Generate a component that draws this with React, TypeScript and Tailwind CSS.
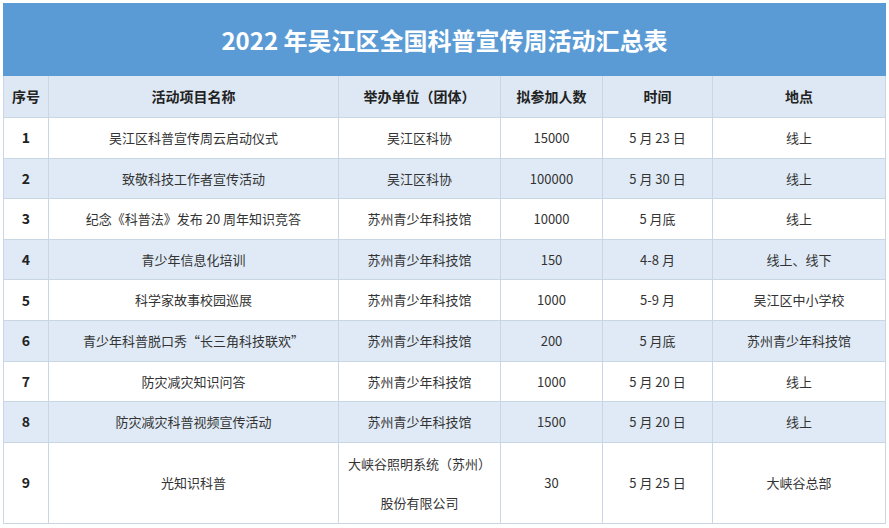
const rows = [
	["1", "吴江区科普宣传周云启动仪式", "吴江区科协", "15000", "5 月 23 日", "线上"],
	["2", "致敬科技工作者宣传活动", "吴江区科协", "100000", "5 月 30 日", "线上"],
	["3", "纪念《科普法》发布 20 周年知识竞答", "苏州青少年科技馆", "10000", "5 月底", "线上"],
	["4", "青少年信息化培训", "苏州青少年科技馆", "150", "4-8 月", "线上、线下"],
	["5", "科学家故事校园巡展", "苏州青少年科技馆", "1000", "5-9 月", "吴江区中小学校"],
	["6", "青少年科普脱口秀“长三角科技联欢”", "苏州青少年科技馆", "200", "5 月底", "苏州青少年科技馆"],
	["7", "防灾减灾知识问答", "苏州青少年科技馆", "1000", "5 月 20 日", "线上"],
	["8", "防灾减灾科普视频宣传活动", "苏州青少年科技馆", "1500", "5 月 20 日", "线上"],
];

const headers = ["序号", "活动项目名称", "举办单位（团体）", "拟参加人数", "时间", "地点"];
const widths = ["w-[45px]", "w-[290px]", "w-[162px]", "w-[102px]", "w-[110px]", "w-[173px]"];

const cell = "border border-[#c9d6e3] text-center align-middle";

export default function App() {
	return (
		<div className="w-[889px] h-[528px] bg-white pt-[3px] pl-[3px] font-['Noto_Sans_CJK_SC','Noto_Sans',sans-serif] text-[#333]">
			<table className="w-[882px] table-fixed border-collapse">
				<colgroup>
					{widths.map((w, i) => (
						<col key={i} className={w} />
					))}
				</colgroup>
				<thead>
					{/* title */}
					<tr className="h-[72px] bg-[#5b9bd5]">
						<th colSpan={6} className="border border-[#5b9bd5] text-white text-[24px] font-bold">
							2022 年吴江区全国科普宣传周活动汇总表
						</th>
					</tr>
					<tr className="h-[42px] bg-[#dde8f4]">
						{headers.map((h, i) => (
							<th key={i} className={`${cell} text-[14px] font-bold text-[#222]`}>
								{h}
							</th>
						))}
					</tr>
				</thead>
				<tbody className="text-[13px]">
					{rows.map((r, idx) => (
						<tr key={idx} className={`h-[40.6px] ${idx % 2 === 1 ? "bg-[#dfeaf6]" : "bg-white"}`}>
							{r.map((c, i) => (
								<td key={i} className={`${cell} ${i === 0 ? "font-bold text-[14px] text-[#222]" : ""}`}>
									{c}
								</td>
							))}
						</tr>
					))}
					<tr className="h-[81px] bg-white">
						<td className={`${cell} font-bold text-[14px] text-[#222]`}>9</td>
						<td className={cell}>光知识科普</td>
						<td className={cell}>
							<div className="flex flex-col gap-[18px] leading-[21px]">
								<span>大峡谷照明系统（苏州）</span>
								<span>股份有限公司</span>
							</div>
						</td>
						<td className={cell}>30</td>
						<td className={cell}>5 月 25 日</td>
						<td className={cell}>大峡谷总部</td>
					</tr>
				</tbody>
			</table>
		</div>
	);
}
